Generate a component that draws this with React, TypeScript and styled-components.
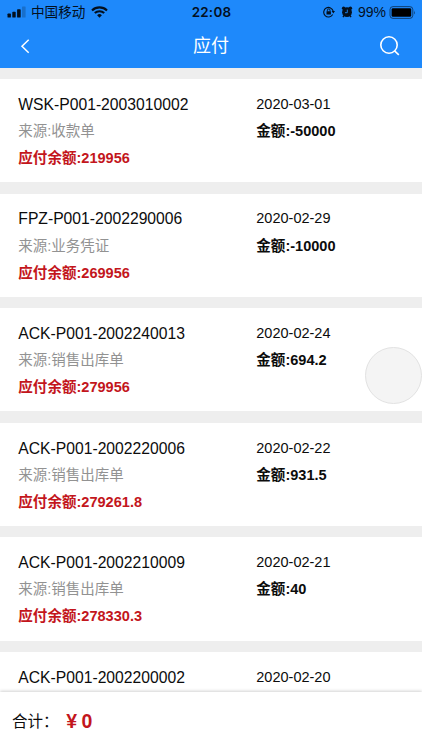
import React from "react";
import styled, { createGlobalStyle } from "styled-components";

const GlobalStyle = createGlobalStyle`
  * { box-sizing: border-box; }
  html, body { margin: 0; padding: 0; overflow: hidden; }
  body {
    font-family: "Liberation Sans", "Noto Sans CJK SC", sans-serif;
    color: #0c0c0c;
    background: #eeeeee;
  }
`;

const Screen = styled.div`
  position: relative;
  display: flex;
  flex-direction: column;
  width: 422px;
  height: 750px;
  overflow: hidden;
  background: #eeeeee;
`;

const Header = styled.header`
  flex: none;
  height: 68px;
  background: #1e89fb;
`;

const StatusBar = styled.div`
  display: grid;
  grid-template-columns: 1fr auto 1fr;
  align-items: center;
  height: 24px;
  padding: 0 6px 0 7px;
  color: #03101f;
`;

const StatusGroup = styled.div<{ $end?: boolean }>`
  display: flex;
  align-items: center;
  justify-content: ${(p) => (p.$end ? "flex-end" : "flex-start")};
`;

const Carrier = styled.span`
  margin: 0 6px 0 5px;
  padding-top: 1px;
  font-size: 13.6px;
  line-height: 23px;
`;

const Clock = styled.span`
  font-family: Inter, "Liberation Sans", sans-serif;
  font-size: 13.4px;
  font-weight: 600;
  line-height: 24px;
  letter-spacing: 0.25px;
`;

const Percent = styled.span`
  margin: 0 3px 0 5px;
  font-size: 14px;
  line-height: 24px;
`;

const NavBar = styled.div`
  display: grid;
  grid-template-columns: 60px 1fr 60px;
  align-items: center;
  height: 44px;
  color: #fff;
`;

const NavTitle = styled.h1`
  margin: 0;
  font-size: 18px;
  font-weight: 400;
  line-height: 44px;
  text-align: center;
`;

const IconButton = styled.button<{ $end?: boolean }>`
  display: flex;
  align-items: center;
  justify-content: ${(p) => (p.$end ? "flex-end" : "flex-start")};
  height: 44px;
  padding: ${(p) => (p.$end ? "0 21px 0 0" : "0 0 0 20px")};
  border: 0;
  background: none;
  color: inherit;
`;

const List = styled.main`
  display: flex;
  flex: 1;
  flex-direction: column;
  gap: 11.3px;
  min-height: 0;
  padding-top: 11px;
  overflow: hidden;
`;

const Card = styled.article`
  display: grid;
  flex: none;
  grid-template-columns: 238px 1fr;
  grid-template-rows: repeat(3, 27.1px);
  align-items: center;
  height: 103.3px;
  padding: 11.8px 0 0 18.3px;
  background: #fff;
  white-space: nowrap;
`;

const Code = styled.span`
  font-size: 15.7px;
  line-height: 27px;
`;

const DateText = styled.span`
  font-size: 14.5px;
  line-height: 27px;
`;

const Source = styled.span`
  color: #929292;
  font-size: 14.5px;
  line-height: 27px;
`;

const Amount = styled.strong<{ $due?: boolean }>`
  color: ${(p) => (p.$due ? "#c3161c" : "#0c0c0c")};
  font-size: 14.55px;
  line-height: 27px;
`;

const Footer = styled.footer`
  z-index: 1;
  display: flex;
  flex: none;
  align-items: center;
  height: 58px;
  padding: 1px 0 0 12px;
  background: #fff;
  box-shadow: 0 -1px 3px rgba(0, 0, 0, 0.18);
`;

const TotalLabel = styled.span`
  width: 53px;
  font-size: 15.5px;
  line-height: 57px;
`;

const TotalValue = styled.strong`
  display: flex;
  gap: 3px;
  color: #c3161c;
  font-size: 19.5px;
  line-height: 57px;
`;

const Currency = styled.span`
  width: 13.5px;
  text-align: center;
`;

const FloatingButton = styled.button`
  position: absolute;
  top: 347px;
  right: 0;
  width: 57px;
  height: 57px;
  padding: 0;
  border: 1px solid #e2e2e2;
  border-radius: 50%;
  background: #f4f4f4;
`;

const SignalIcon = () => (
  <svg width="19" height="12" viewBox="0 0 19 12" fill="currentColor">
    <rect x="0.5" y="7.6" width="3.4" height="4" rx="0.7" />
    <rect x="5.3" y="5.8" width="3.4" height="5.8" rx="0.7" />
    <rect x="10.1" y="3.2" width="3.6" height="8.4" rx="0.7" />
    <rect x="15" y="0.4" width="3.6" height="11.2" rx="0.7" opacity="0.22" />
  </svg>
);

const WifiIcon = () => (
  <svg width="17" height="12" viewBox="0 0 17 12" fill="none" stroke="currentColor" strokeWidth="2.1">
    <path d="M1 4.4a10.8 10.8 0 0 1 15 0" />
    <path d="M3.8 7.1a6.8 6.8 0 0 1 9.4 0" />
    <path d="M6.1 9.2a3.5 3.5 0 0 1 4.8 0L8.5 11.7z" fill="currentColor" stroke="none" />
  </svg>
);

const RotationLockIcon = () => (
  <svg width="12" height="12" viewBox="0 0 12 12" fill="none" stroke="currentColor">
    <path d="M9.7 8.6A4.8 4.8 0 1 1 10.2 5.2" strokeWidth="1.1" />
    <path d="M8.7 5H12l-1.7 2.6z" fill="currentColor" stroke="none" />
    <rect x="3.5" y="5.2" width="4.4" height="3.4" rx="0.4" fill="currentColor" stroke="none" />
    <path d="M4.4 5.4V4.2a1.3 1.3 0 0 1 2.6 0v1.2" strokeWidth="0.9" />
  </svg>
);

const AlarmGlyph = styled.svg`
  margin-left: 6px;
`;

const AlarmIcon = () => (
  <AlarmGlyph width="12" height="12" viewBox="0 0 12 12" fill="currentColor">
    <circle cx="6" cy="6.2" r="4.9" />
    <circle cx="2.6" cy="2.3" r="1.7" />
    <circle cx="9.4" cy="2.3" r="1.7" />
    <path d="M3 9.5l-1 1.6M9 9.5l1 1.6" stroke="currentColor" strokeWidth="1.4" />
    <path d="M6.3 3.6v3.1H4" fill="none" stroke="#1e89fb" strokeWidth="0.9" />
  </AlarmGlyph>
);

const BatteryIcon = () => (
  <svg width="27" height="13" viewBox="0 0 27 13">
    <rect x="1" y="0.6" width="22.8" height="11.8" rx="3" fill="none" stroke="#03101f" strokeOpacity="0.6" />
    <rect x="2.6" y="2.2" width="19.6" height="8.6" rx="1.4" fill="#000" />
    <path d="M25 4.4q1.6 2.1 0 4.2z" fill="#03101f" fillOpacity="0.6" />
  </svg>
);

const BackIcon = () => (
  <svg width="11" height="16" viewBox="0 0 11 16" fill="none" stroke="currentColor" strokeWidth="1.5">
    <path d="M8.7 1.7L2 8.2l6.7 6.5" />
  </svg>
);

const SearchIcon = () => (
  <svg width="22" height="22" viewBox="0 0 22 22" fill="none" stroke="currentColor" strokeWidth="1.6">
    <circle cx="10" cy="10" r="8.2" />
    <path d="M15.3 15.6l4.5 4.2" />
  </svg>
);

interface Entry {
  code: string;
  date: string;
  source?: string;
  amount?: string;
  due?: string;
}

const entries: Entry[] = [
  { code: "WSK-P001-2003010002", date: "2020-03-01", source: "收款单", amount: "-50000", due: "219956" },
  { code: "FPZ-P001-2002290006", date: "2020-02-29", source: "业务凭证", amount: "-10000", due: "269956" },
  { code: "ACK-P001-2002240013", date: "2020-02-24", source: "销售出库单", amount: "694.2", due: "279956" },
  { code: "ACK-P001-2002220006", date: "2020-02-22", source: "销售出库单", amount: "931.5", due: "279261.8" },
  { code: "ACK-P001-2002210009", date: "2020-02-21", source: "销售出库单", amount: "40", due: "278330.3" },
  { code: "ACK-P001-2002200002", date: "2020-02-20" },
];

const EntryCard = ({ code, date, source, amount, due }: Entry) => (
  <Card>
    <Code>{code}</Code>
    <DateText>{date}</DateText>
    {source && <Source>来源:{source}</Source>}
    {amount && <Amount>金额:{amount}</Amount>}
    {due && <Amount $due>应付余额:{due}</Amount>}
  </Card>
);

export default function App() {
  return (
    <>
      <GlobalStyle />
      <Screen>
        <Header>
          <StatusBar>
            <StatusGroup>
              <SignalIcon />
              <Carrier>中国移动</Carrier>
              <WifiIcon />
            </StatusGroup>
            <Clock>22:08</Clock>
            <StatusGroup $end>
              <RotationLockIcon />
              <AlarmIcon />
              <Percent>99%</Percent>
              <BatteryIcon />
            </StatusGroup>
          </StatusBar>
          <NavBar>
            <IconButton aria-label="返回">
              <BackIcon />
            </IconButton>
            <NavTitle>应付</NavTitle>
            <IconButton $end aria-label="搜索">
              <SearchIcon />
            </IconButton>
          </NavBar>
        </Header>
        <List>
          {entries.map((entry) => (
            <EntryCard key={entry.code} {...entry} />
          ))}
        </List>
        <Footer>
          <TotalLabel>合计：</TotalLabel>
          <TotalValue>
            <Currency>¥</Currency>
            <span>0</span>
          </TotalValue>
        </Footer>
        <FloatingButton aria-label="更多" />
      </Screen>
    </>
  );
}
